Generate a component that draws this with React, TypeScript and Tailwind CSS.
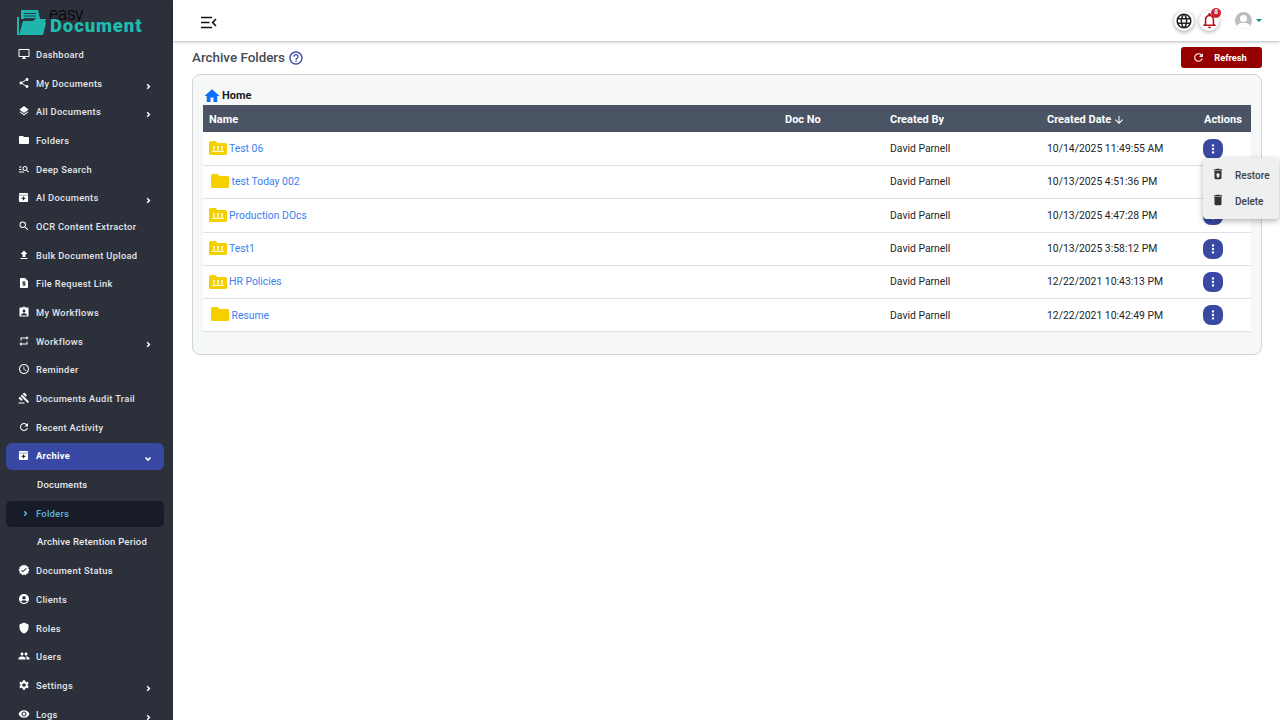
import { ReactNode } from 'react';
import {
  MdAccessTime,
  MdAccountCircle,
  MdArrowDownward,
  MdAssignmentInd,
  MdDelete,
  MdFileUpload,
  MdFolder,
  MdGavel,
  MdHelpOutline,
  MdHome,
  MdLanguage,
  MdLayers,
  MdManageSearch,
  MdMoreVert,
  MdOutlineDesktopWindows,
  MdOutlineNotifications,
  MdOutlineRefresh,
  MdPeople,
  MdRefresh,
  MdRepeat,
  MdRequestPage,
  MdRestoreFromTrash,
  MdSearch,
  MdSettings,
  MdShare,
  MdShield,
  MdVerified,
  MdVisibility,
} from 'react-icons/md';

type NavItem = { label: string; icon: ReactNode; arrow?: boolean };

const iconCls = 'h-[12px] w-[12px]';

// archive box with a plus, no exact match in the icon packs
function ArchiveIcon() {
  return (
    <svg viewBox="0 0 12 12" className="h-[11px] w-[11px]">
      <rect x="1" y="1" width="10" height="10" rx="1.200" fill="currentColor" />
      <path d="M1 3.400h10" stroke="#2b303b" strokeWidth="0.5" />
      <path d="M6 5v4M4 7h4" stroke="#2b303b" strokeWidth="1.300" />
    </svg>
  );
}

function Chevron({ down, className }: { down?: boolean; className: string }) {
  return (
    <svg viewBox="0 0 8 8" className={className} fill="none" stroke="currentColor" strokeWidth="1.700">
      <path d={down ? 'M1.500 2.500L4 5l2.500-2.500' : 'M2.500 1.500L5 4 2.500 6.500'} />
    </svg>
  );
}

const topItems: NavItem[] = [
  { label: 'Dashboard', icon: <MdOutlineDesktopWindows className={iconCls} /> },
  { label: 'My Documents', icon: <MdShare className={iconCls} />, arrow: true },
  { label: 'All Documents', icon: <MdLayers className={iconCls} />, arrow: true },
  { label: 'Folders', icon: <MdFolder className={iconCls} /> },
  { label: 'Deep Search', icon: <MdManageSearch className={iconCls} /> },
  { label: 'AI Documents', icon: <ArchiveIcon />, arrow: true },
  { label: 'OCR Content Extractor', icon: <MdSearch className={iconCls} /> },
  { label: 'Bulk Document Upload', icon: <MdFileUpload className={iconCls} /> },
  { label: 'File Request Link', icon: <MdRequestPage className={iconCls} /> },
  { label: 'My Workflows', icon: <MdAssignmentInd className={iconCls} /> },
  { label: 'Workflows', icon: <MdRepeat className={iconCls} />, arrow: true },
  { label: 'Reminder', icon: <MdAccessTime className={iconCls} /> },
  { label: 'Documents Audit Trail', icon: <MdGavel className={iconCls} /> },
  { label: 'Recent Activity', icon: <MdRefresh className={iconCls} /> },
];

const bottomItems: NavItem[] = [
  { label: 'Document Status', icon: <MdVerified className={iconCls} /> },
  { label: 'Clients', icon: <MdAccountCircle className={iconCls} /> },
  { label: 'Roles', icon: <MdShield className={iconCls} /> },
  { label: 'Users', icon: <MdPeople className={iconCls} /> },
  { label: 'Settings', icon: <MdSettings className={iconCls} />, arrow: true },
  { label: 'Logs', icon: <MdVisibility className={iconCls} />, arrow: true },
];

const rows = [
  { name: 'Test 06', shared: true, date: '10/14/2025 11:49:55 AM' },
  { name: 'test Today 002', shared: false, date: '10/13/2025 4:51:36 PM' },
  { name: 'Production DOcs', shared: true, date: '10/13/2025 4:47:28 PM' },
  { name: 'Test1', shared: true, date: '10/13/2025 3:58:12 PM' },
  { name: 'HR Policies', shared: true, date: '12/22/2021 10:43:13 PM' },
  { name: 'Resume', shared: false, date: '12/22/2021 10:42:49 PM' },
];

function NavRow({ item }: { item: NavItem }) {
  return (
    <div className="flex h-[28.7px] shrink-0 items-center pl-[18px] pr-[21px] text-[#e4e6ea]">
      <span className="mb-[2px] flex w-[18px] shrink-0 justify-start text-white">{item.icon}</span>
      <span className="text-[9.3px] font-medium tracking-[0.33px]">{item.label}</span>
      {item.arrow && <Chevron className="ml-auto mt-[5px] h-[7px] w-[7px] text-white" />}
    </div>
  );
}

function Logo() {
  return (
    <div className="flex h-[40.5px] shrink-0 items-start pl-[17px] pt-[10px]">
      <svg width="30" height="26" viewBox="0 0 30 26" className="shrink-0">
        <path d="M4 0h17l2 9H4z" fill="#1fb5ad" />
        <path d="M7 3.500h12M7 6h12M7 8.500h12" stroke="#2b303b" strokeWidth="0.900" />
        <path d="M0 7h2v18H0z" fill="#1fb5ad" />
        <path d="M6 11h10l2-2h11l-1 3 1 1-3 12H2z" fill="#1fb5ad" />
      </svg>
      <div className="relative ml-[3px] h-[26px] w-[95px] font-['Roboto',sans-serif]">
        <span className="absolute left-[-1px] top-[-6px] text-[17.5px] font-light leading-[20px] tracking-[-0.4px] text-black">easy</span>
        <span className="absolute left-0 top-[6px] text-[18.5px] font-black leading-[20px] tracking-[0.9px] text-[#1fbcb0]">Document</span>
      </div>
    </div>
  );
}

function Sidebar() {
  return (
    <aside className="flex h-[720px] w-[173px] shrink-0 flex-col overflow-hidden bg-[#2b303b] font-['Roboto',sans-serif]">
      <Logo />
      {topItems.map((item) => (
        <NavRow key={item.label} item={item} />
      ))}
      <div className="ml-[6px] mr-[9px] mt-[0.7px] flex h-[27px] shrink-0 items-center rounded-[6px] bg-[#3949a3] pl-[12px] pr-[12px] text-white">
        <span className="mb-[2px] flex w-[18px] shrink-0"><ArchiveIcon /></span>
        <span className="text-[9.3px] font-bold tracking-[0.33px]">Archive</span>
        <Chevron down className="ml-auto mt-[5px] h-[8px] w-[8px]" />
      </div>
      <div className="flex h-[30px] shrink-0 items-center pl-[37px] text-[9.5px] font-medium tracking-[0.2px] text-[#e8eaee]">
        Documents
      </div>
      <div className="ml-[6px] mr-[9px] mt-[1px] flex h-[26px] shrink-0 items-center rounded-[5px] bg-[#181c28] pl-[16px] text-[9.5px] font-medium tracking-[0.2px] text-[#5fb4dc]">
        <Chevron className="mr-[7px] h-[7px] w-[7px]" />
        Folders
      </div>
      <div className="flex h-[30px] shrink-0 items-center pl-[37px] text-[9.5px] font-medium tracking-[0.2px] text-[#e8eaee]">
        Archive Retention Period
      </div>
      {bottomItems.map((item) => (
        <NavRow key={item.label} item={item} />
      ))}
    </aside>
  );
}

function Header() {
  return (
    <header className="flex h-[41px] shrink-0 items-center bg-white pl-[28px] pr-[18px] shadow-[0_1px_3px_rgba(0,0,0,0.28)]">
      <svg width="16" height="13" viewBox="0 0 16 13" className="mt-[4px]">
        <path d="M0 1.500h11M0 6.500h8.500M0 11.500h11" stroke="#111" strokeWidth="1.600" />
        <path d="M15 3l-3.400 3.500L15 10" stroke="#111" strokeWidth="1.600" fill="none" />
      </svg>
      <div className="ml-auto flex items-center">
        <span className="flex h-[20px] w-[20px] items-center justify-center rounded-full bg-white shadow-[0_1px_4px_rgba(0,0,0,0.4)]">
          <MdLanguage className="h-[18px] w-[18px] text-[#222]" />
        </span>
        <span className="relative ml-[5px] flex h-[20px] w-[20px] items-center justify-center rounded-full bg-white shadow-[0_1px_4px_rgba(0,0,0,0.35)]">
          <MdOutlineNotifications className="h-[19px] w-[19px] text-[#b3141c]" />
          <span className="absolute right-[-2px] top-[-3px] flex h-[10px] w-[10px] items-center justify-center rounded-full bg-[#c8232c] text-[6.5px] font-bold text-white">
            8
          </span>
        </span>
        <span className="relative ml-[16px] flex h-[17px] w-[17px] items-center justify-center overflow-hidden rounded-full bg-[#bdbdbd]">
          <span className="absolute top-[3px] h-[7px] w-[7px] rounded-full bg-white" />
          <span className="absolute top-[11px] h-[9px] w-[13px] rounded-full bg-white" />
        </span>
        <span className="ml-[4px] h-0 w-0 border-x-[3px] border-t-[3px] border-x-transparent border-t-[#0f8a80]" />
      </div>
    </header>
  );
}

function FolderIcon({ shared }: { shared: boolean }) {
  const body =
    'M1.500 0h5l2 2h8a1.500 1.500 0 0 1 1.500 1.500v9a1.500 1.500 0 0 1-1.500 1.500h-15A1.500 1.500 0 0 1 0 12.500v-11A1.500 1.500 0 0 1 1.500 0z';
  if (!shared) {
    return (
      <svg width="18" height="14" viewBox="0 0 18 14" className="mb-[2px] ml-[1.5px] mr-[3px] shrink-0">
        <path d={body} fill="#f4d000" />
      </svg>
    );
  }
  return (
    <svg width="18" height="14" viewBox="0 0 18 14" className="mb-[1px] mr-[2px] shrink-0">
      <path d={body} fill="#f4d000" />
      <circle cx="5" cy="6" r="1" fill="#fff" />
      <circle cx="9" cy="6" r="1" fill="#fff" />
      <circle cx="13" cy="6" r="1" fill="#fff" />
      <path d="M4.400 7h1.200v2.500H4.400zM8.400 7h1.200v2.500H8.400zM12.400 7h1.200v2.500h-1.200z" fill="#fff" />
      <path d="M3 9.800h12v1H3z" fill="#fff" />
    </svg>
  );
}

function RowMenu() {
  return (
    <div className="absolute left-[1010px] top-[83px] z-10 h-[61px] w-[76px] rounded-[4px] bg-[#edf0ef] text-[10px] font-medium text-[#3c4348] shadow-[0_2px_6px_rgba(0,0,0,0.3)]">
      <div className="flex h-[31px] items-center pl-[8px] pt-[4px]">
        <MdRestoreFromTrash className="mb-[3px] h-[14px] w-[14px] text-[#333]" />
        <span className="ml-[10px]">Restore</span>
      </div>
      <div className="flex h-[24px] items-center pl-[8px]">
        <MdDelete className="mb-[2px] h-[14px] w-[14px] text-[#333]" />
        <span className="ml-[10px]">Delete</span>
      </div>
    </div>
  );
}

function ArchiveTable() {
  return (
    <div className="relative h-[281px] rounded-[8px] border border-[#ced4d4] bg-[#f6f8f8] px-[10px] pt-[11px]">
      <div className="flex h-[19px] items-center pt-[2px] text-[11px] font-bold text-[#1a1d22]">
        <MdHome className="mb-[2px] mr-[1px] h-[18px] w-[18px] text-[#0d6efd]" />
        Home
      </div>
      <div className="grid h-[27px] grid-cols-[582px_105px_157px_157px_47px] items-center bg-[#4a5464] pt-[3px] text-[11px] font-bold text-white">
        <span className="pl-[6px]">Name</span>
        <span>Doc No</span>
        <span>Created By</span>
        <span className="flex items-center">
          Created Date
          <MdArrowDownward className="ml-[2px] h-[12px] w-[12px]" />
        </span>
        <span>Actions</span>
      </div>
      <div className="bg-white pt-[0.7px]">
        {rows.map((row) => (
          <div
            key={row.name}
            className="grid h-[33.3px] grid-cols-[582px_105px_157px_157px_47px] items-center border-b border-[#dee2e6] bg-white text-[10.4px] text-[#212529]"
          >
            <span className="flex items-center pl-[6px] text-[#3a7ff0]">
              <FolderIcon shared={row.shared} />
              {row.name}
            </span>
            <span />
            <span>David Parnell</span>
            <span>{row.date}</span>
            <span className="ml-[-1px] flex h-[20px] w-[20px] items-center justify-center rounded-[8px] bg-[#3949a3] text-white">
              <MdMoreVert className="h-[14px] w-[14px]" />
            </span>
          </div>
        ))}
      </div>
      <RowMenu />
    </div>
  );
}

export default function App() {
  return (
    <div className="flex h-[720px] w-[1280px] overflow-hidden bg-white">
      <Sidebar />
      <div className="flex min-w-0 flex-1 flex-col font-['Roboto',sans-serif]">
        <Header />
        <main className="pl-[19px] pr-[18px] pt-[6px]">
          <div className="mb-[6px] flex h-[21px] items-center">
            <h1 className="pt-[1px] text-[13.4px] font-medium text-[#444b55]">Archive Folders</h1>
            <MdHelpOutline className="ml-[3px] h-[16px] w-[16px] text-[#3949a3]" />
            <button
              type="button"
              className="ml-auto flex h-[21px] w-[81px] items-center justify-center rounded-[3px] bg-[#960000] pr-[4px] text-[9.3px] font-bold text-white"
            >
              <MdOutlineRefresh className="mr-[9px] h-[13px] w-[13px]" />
              Refresh
            </button>
          </div>
          <ArchiveTable />
        </main>
      </div>
    </div>
  );
}
